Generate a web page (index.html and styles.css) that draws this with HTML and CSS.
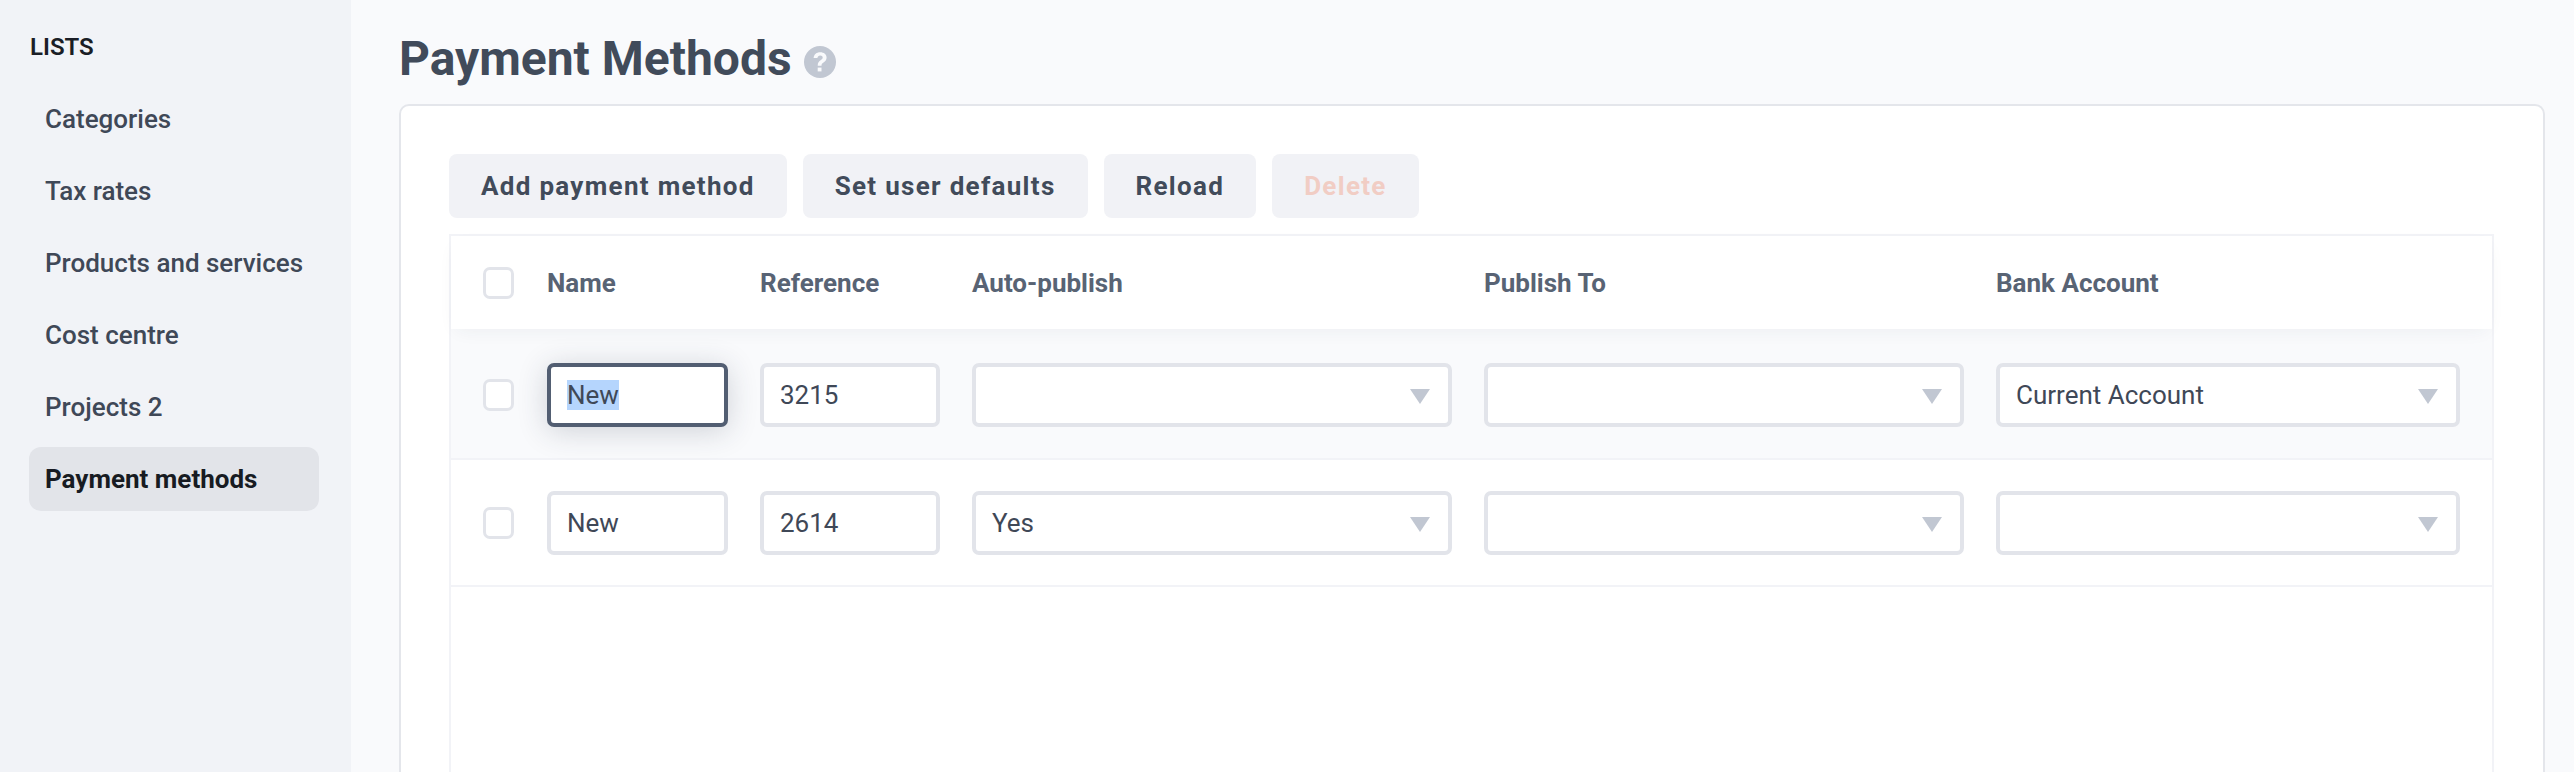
FILE: index.html
```html
<!DOCTYPE html>
<html lang="en">
<head>
<meta charset="utf-8">
<title>Payment Methods</title>
<link rel="stylesheet" href="styles.css">
</head>
<body>
<div class="app">
  <aside class="sidebar">
    <h2 class="side-title">LISTS</h2>
    <nav class="side-nav">
      <a class="side-item">Categories</a>
      <a class="side-item">Tax rates</a>
      <a class="side-item">Products and services</a>
      <a class="side-item">Cost centre</a>
      <a class="side-item">Projects 2</a>
      <a class="side-item active">Payment methods</a>
    </nav>
  </aside>
  <main class="main">
    <header class="page-head">
      <h1 class="page-title">Payment Methods</h1>
      <svg class="help" viewBox="0 0 32 32" aria-hidden="true"><circle cx="16" cy="16" r="16" fill="#c1c7d2"/><path d="M9.6 12c.4-3.6 2.9-5.7 6.6-5.7 3.8 0 6.4 2.2 6.4 5.3 0 2.4-1.2 3.7-3.1 4.9-1.5 1-2 1.6-2 3.2h-3.8c0-2.8.9-4.1 2.9-5.4 1.3-.9 2.1-1.5 2.1-2.7 0-1.3-1-2.1-2.5-2.1-1.6 0-2.5.9-2.8 2.5z" fill="#f9fafc"/><rect x="13.7" y="21.6" width="3.8" height="3.8" fill="#f9fafc"/></svg>
    </header>
    <section class="card">
      <div class="toolbar">
        <button class="btn">Add payment method</button>
        <button class="btn">Set user defaults</button>
        <button class="btn">Reload</button>
        <button class="btn disabled">Delete</button>
      </div>
      <div class="table">
        <div class="row head">
          <span class="check"></span>
          <span class="th">Name</span>
          <span class="th">Reference</span>
          <span class="th">Auto-publish</span>
          <span class="th">Publish To</span>
          <span class="th">Bank Account</span>
        </div>
        <div class="row body-row hover">
          <span class="check"></span>
          <div class="field focused"><span class="selected">New</span></div>
          <div class="field">3215</div>
          <div class="field select"></div>
          <div class="field select"></div>
          <div class="field select">Current Account</div>
        </div>
        <div class="row body-row">
          <span class="check"></span>
          <div class="field">New</div>
          <div class="field">2614</div>
          <div class="field select">Yes</div>
          <div class="field select"></div>
          <div class="field select"></div>
        </div>
      </div>
    </section>
  </main>
</div>
</body>
</html>
```
FILE: styles.css
```css
* { box-sizing: border-box; }
html, body { margin: 0; height: 100%; overflow: hidden; }
body { font-family: Roboto, "Liberation Sans", sans-serif; color: #3f4857; }
.app { display: flex; height: 772px; overflow: hidden; }

.sidebar { width: 351px; flex: none; background: #f1f3f7; padding: 32px 32px 0 29px; }
.side-title { margin: 0 0 25px 1px; font-size: 24px; line-height: 30px; font-weight: 600; color: #1a1e26; }
.side-nav { display: flex; flex-direction: column; gap: 8px; }
.side-item { height: 64px; padding: 0 16px; display: flex; align-items: center; white-space: nowrap; font-size: 26px; font-weight: 500; color: #3f4857; border-radius: 12px; }
.side-item.active { background: #e2e4e9; color: #171b22; font-weight: 700; }

.main { flex: 1; min-width: 0; background: #f9fafc; padding: 0 29px 0 48px; }
.page-head { height: 104px; padding-top: 31px; display: flex; align-items: flex-start; gap: 12px; }
.page-title { margin: 0; font-size: 48px; line-height: 56px; font-weight: 700; color: #414b5a; }
.help { width: 32px; height: 32px; margin-top: 15px; }

.card { background: #fff; border: 2px solid #e4e6eb; border-radius: 10px; padding: 48px 49px 0 48px; height: 800px; }
.toolbar { display: flex; gap: 16px; margin-bottom: 16px; }
.btn { height: 64px; padding: 0 32px; border: 0; border-radius: 8px; background: #f1f2f6; font: 700 26px Roboto, sans-serif; letter-spacing: 1.3px; color: #414b5a; }
.btn.disabled { background: #f1f2f6; color: #f1cdc4; }

.table { border: 2px solid #f2f3f7; height: 700px; }
.row { display: grid; grid-template-columns: 32px 181px 180px 480px 480px 464px; column-gap: 32px; align-items: center; padding: 0 32px; }
.head { height: 93px; padding-top: 1px; background: #fff; position: relative; box-shadow: 0 6px 18px -6px rgba(40, 50, 70, .07); }
.th { font-size: 26px; font-weight: 700; color: #586374; }
.body-row { height: 129px; padding-top: 1px; border-top: 2px solid #f2f3f7; }
.body-row:last-child { border-bottom: 2px solid #f2f3f7; }
.hover { background: #f9fafc; border-top: 0; padding-top: 3px; }
.check { width: 31px; height: 32px; background: #fff; border: 3px solid #e2e4ea; border-radius: 7px; }
.field { position: relative; height: 64px; padding: 0 16px; display: flex; align-items: center; background: #fff; border: 4px solid #e2e4ea; border-radius: 7px; font-size: 26px; color: #3f4857; }
.field.focused { border-color: #525e72; box-shadow: 0 4px 30px rgba(40, 50, 70, .2); }
.selected { background: #b5d5fd; line-height: 30px; }
.select::after { content: ""; position: absolute; right: 18px; top: 22px; border-left: 10px solid transparent; border-right: 10px solid transparent; border-top: 15px solid #c1c7d2; }
```
